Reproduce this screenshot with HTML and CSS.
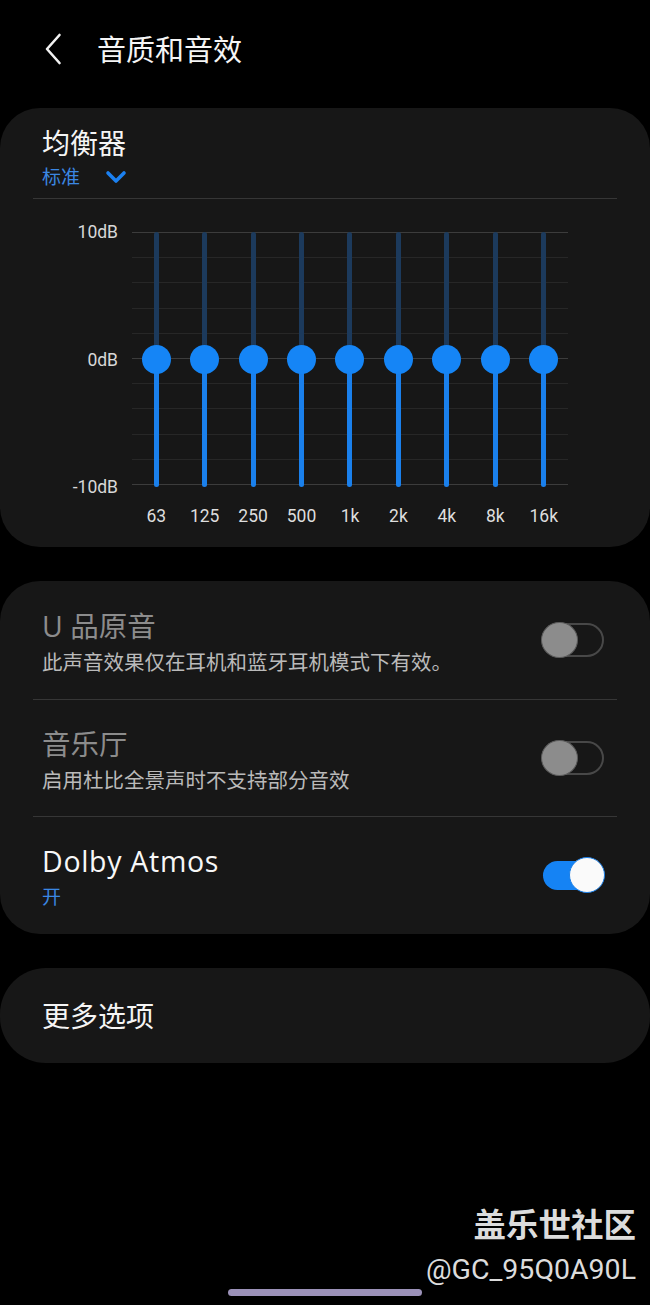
FILE: index.html
```html
<!DOCTYPE html>
<html lang="zh-CN">
<head>
  <meta charset="UTF-8" />
  <meta name="viewport" content="width=device-width, initial-scale=1.0" />
  <title>音质和音效</title>
  <link rel="stylesheet" href="styles.css">
</head>
<body>
  <header class="topbar">
    <svg class="back" width="18" height="32" viewBox="0 0 18 32">
      <path d="M15.5 2 L3 16 L15.5 30" fill="none" stroke="#f2f2f2" stroke-width="2.6" stroke-linecap="round" stroke-linejoin="round"/>
    </svg>
    <h1>音质和音效</h1>
  </header>

  <section class="card eq-card">
    <div class="eq-head">
      <h2>均衡器</h2>
      <div class="preset">
        <span>标准</span>
        <svg width="22" height="14" viewBox="0 0 22 14">
          <path d="M3 3 L11 11 L19 3" fill="none" stroke="#1b80f0" stroke-width="3.6" stroke-linecap="round" stroke-linejoin="round"/>
        </svg>
      </div>
    </div>

    <div class="eq-chart">
      <div class="db-scale">
        <span>10dB</span>
        <span>0dB</span>
        <span>-10dB</span>
      </div>
      <div class="plot">
        <div class="gridlines">
          <i class="major"></i><i></i><i></i><i></i><i></i>
          <i class="major"></i><i></i><i></i><i></i><i></i>
          <i class="major"></i>
        </div>
        <div class="bands">
          <div class="band"><div class="slider"><span class="track"></span><span class="knob"></span></div><span class="freq">63</span></div>
          <div class="band"><div class="slider"><span class="track"></span><span class="knob"></span></div><span class="freq">125</span></div>
          <div class="band"><div class="slider"><span class="track"></span><span class="knob"></span></div><span class="freq">250</span></div>
          <div class="band"><div class="slider"><span class="track"></span><span class="knob"></span></div><span class="freq">500</span></div>
          <div class="band"><div class="slider"><span class="track"></span><span class="knob"></span></div><span class="freq">1k</span></div>
          <div class="band"><div class="slider"><span class="track"></span><span class="knob"></span></div><span class="freq">2k</span></div>
          <div class="band"><div class="slider"><span class="track"></span><span class="knob"></span></div><span class="freq">4k</span></div>
          <div class="band"><div class="slider"><span class="track"></span><span class="knob"></span></div><span class="freq">8k</span></div>
          <div class="band"><div class="slider"><span class="track"></span><span class="knob"></span></div><span class="freq">16k</span></div>
        </div>
      </div>
    </div>
  </section>

  <section class="card toggles">
    <div class="row dim">
      <div class="row-text">
        <div class="row-title">U 品原音</div>
        <div class="row-sub">此声音效果仅在耳机和蓝牙耳机模式下有效。</div>
      </div>
      <div class="switch"><span class="knob"></span></div>
    </div>
    <div class="row dim">
      <div class="row-text">
        <div class="row-title">音乐厅</div>
        <div class="row-sub">启用杜比全景声时不支持部分音效</div>
      </div>
      <div class="switch"><span class="knob"></span></div>
    </div>
    <div class="row">
      <div class="row-text">
        <div class="row-title latin">Dolby Atmos</div>
        <div class="row-sub row-value">开</div>
      </div>
      <div class="switch on"><span class="knob"></span></div>
    </div>
  </section>

  <section class="card more">
    <span>更多选项</span>
  </section>

  <footer class="watermark">
    <div class="wm-title">盖乐世社区</div>
    <div class="wm-id">@GC_95Q0A90L</div>
    <div class="home-bar"></div>
  </footer>
</body>
</html>
```

FILE: styles.css
```css
* {
  box-sizing: border-box;
}

body {
  margin: 0;
  width: 650px;
  height: 1305px;
  overflow: hidden;
  background-color: #000;
  color: #f5f5f5;
  font-family: "Open Sans", "Noto Sans CJK SC", sans-serif;
}

.topbar {
  height: 98px;
  display: flex;
  align-items: center;
  gap: 35px;
  padding-left: 44px;
}

.topbar h1 {
  margin: 0;
  font-size: 29px;
  font-weight: 400;
  line-height: 1;
}

.card {
  background-color: #171717;
  border-radius: 40px;
  margin-top: 34px;
  padding: 0 33px;
}

/* equalizer */

.eq-card {
  margin-top: 10px;
  padding-top: 18px;
  padding-bottom: 21px;
}

.eq-head {
  padding: 0 9px 9px;
  border-bottom: 1px solid #363636;
}

.eq-head h2 {
  margin: 0;
  font-size: 28px;
  font-weight: 400;
  line-height: 34px;
}

.preset {
  margin-top: 5px;
  display: flex;
  align-items: center;
  gap: 25px;
  font-size: 19px;
  line-height: 24px;
  color: #3b87e3;
}

.eq-chart {
  display: flex;
  gap: 14px;
  margin-top: 33px;
}

.db-scale {
  width: 85px;
  height: 275px;
  margin-top: -10px;
  display: flex;
  flex-direction: column;
  justify-content: space-between;
  text-align: right;
  font-family: Roboto, sans-serif;
  font-size: 17.5px;
  line-height: 20px;
  color: #d8d8d8;
}

.plot {
  width: 436px;
  display: grid;
}

.gridlines {
  grid-area: 1 / 1;
  height: 253px;
  display: flex;
  flex-direction: column;
  justify-content: space-between;
}

.gridlines i {
  display: block;
  height: 1px;
  background-color: #272727;
}

.gridlines i.major {
  background-color: #3c3c3c;
}

.bands {
  grid-area: 1 / 1;
  display: grid;
  grid-template-columns: repeat(9, 1fr);
}

.band {
  display: flex;
  flex-direction: column;
  align-items: center;
}

.slider {
  display: grid;
  place-items: center;
  width: 30px;
  height: 255px;
}

.slider .track {
  grid-area: 1 / 1;
  width: 5px;
  height: 100%;
  border-radius: 3px;
  background: linear-gradient(to bottom, #1c3a5c 50%, #1a80ec 50%);
}

.slider .knob {
  grid-area: 1 / 1;
  width: 29px;
  height: 29px;
  border-radius: 50%;
  background-color: #1585f6;
}

.freq {
  margin-top: 19px;
  font-family: Roboto, sans-serif;
  font-size: 17.5px;
  line-height: 20px;
  color: #dedede;
}

/* toggle rows */

.row {
  height: 117.5px;
  display: flex;
  align-items: center;
  justify-content: space-between;
  padding: 0 13px 0 9px;
}

.row + .row {
  border-top: 1px solid #363636;
}

.row-text {
  padding-top: 4px;
}

.row-title {
  font-size: 28.5px;
  line-height: 34px;
  color: #f7f7f7;
}

.row-title.latin {
  letter-spacing: 0.7px;
}

.row-sub {
  margin-top: 6px;
  font-size: 20.5px;
  line-height: 26px;
  color: #bababa;
}

.dim .row-title {
  color: #8c8c8c;
}

.row-sub.row-value {
  font-size: 19px;
  color: #3b87e3;
}

.switch {
  width: 62px;
  height: 34px;
  display: flex;
  align-items: center;
  border: 2px solid #484848;
  border-radius: 17px;
}

.switch .knob {
  flex: none;
  width: 37px;
  height: 36px;
  margin-left: -3px;
  border-radius: 50%;
  background-color: #8c8c8c;
  border: 1.5px solid #5c5c5c;
}

.switch.on {
  width: 61px;
  height: 29px;
  border: none;
  justify-content: flex-end;
  background-color: #1583f4;
}

.switch.on .knob {
  width: 36px;
  height: 36px;
  margin: 0 -1px 0 0;
  background-color: #fafafa;
  border: 1.5px solid #1a7fe8;
}

/* more options */

.more {
  height: 95px;
  border-radius: 46px;
  display: flex;
  align-items: center;
  padding-left: 42px;
  font-size: 28px;
}

/* watermark */

.watermark {
  margin-top: 142px;
  padding-right: 14px;
  text-align: right;
  color: #dcdcdc;
}

.wm-title {
  font-size: 32.5px;
  font-weight: 700;
  line-height: 40px;
}

.wm-id {
  margin-top: 7px;
  font-family: Roboto, sans-serif;
  font-size: 28.5px;
  line-height: 36px;
}

.home-bar {
  width: 194px;
  height: 7px;
  margin: 1px auto 0;
  border-radius: 4px;
  background-color: #9b91b8;
  transform: translateX(7px);
}
```
